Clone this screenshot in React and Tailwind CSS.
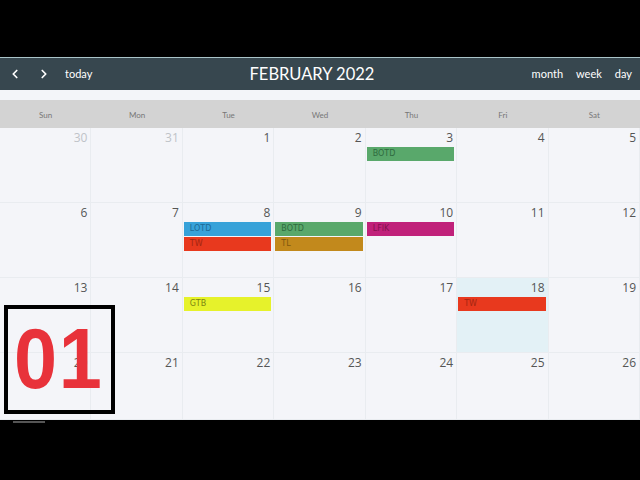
import { ChevronLeft, ChevronRight } from "lucide-react";

const days = ["Sun", "Mon", "Tue", "Wed", "Thu", "Fri", "Sat"];

const weeks = [
  [
    { n: 30, other: true },
    { n: 31, other: true },
    { n: 1 },
    { n: 2 },
    { n: 3, events: [{ t: "BOTD", c: "bg-[#59a86b] text-[#2f6b3f]" }] },
    { n: 4 },
    { n: 5 },
  ],
  [
    { n: 6 },
    { n: 7 },
    {
      n: 8,
      events: [
        { t: "LOTD", c: "bg-[#37a2d9] text-[#1e6a96]" },
        { t: "TW", c: "bg-[#e8391e] text-[#a32611]" },
      ],
    },
    {
      n: 9,
      events: [
        { t: "BOTD", c: "bg-[#59a86b] text-[#2f6b3f]" },
        { t: "TL", c: "bg-[#c2891c] text-[#7f580f]" },
      ],
    },
    { n: 10, events: [{ t: "LFIK", c: "bg-[#c0217a] text-[#85104f]" }] },
    { n: 11 },
    { n: 12 },
  ],
  [
    { n: 13 },
    { n: 14 },
    { n: 15, events: [{ t: "GTB", c: "bg-[#e6f22b] text-[#7d8512]" }] },
    { n: 16 },
    { n: 17 },
    { n: 18, today: true, events: [{ t: "TW", c: "bg-[#e8391e] text-[#a32611]" }] },
    { n: 19 },
  ],
  [{ n: 20 }, { n: 21 }, { n: 22 }, { n: 23 }, { n: 24 }, { n: 25 }, { n: 26 }],
];

const Cell = ({ day }) => (
  <div
    className={`border-r border-[#e9ecf0] flex flex-col ${
      day.today ? "bg-[#e3f1f6]" : ""
    }`}
  >
    <div
      className={`h-[19px] pr-[3px] pt-[2px] text-right text-[12px] leading-[15px] ${
        day.other ? "text-[#bfc3c8]" : "text-[#555]"
      }`}
    >
      {day.n}
    </div>
    {(day.events || []).map((e, i) => (
      <div
        key={i}
        className={`ml-[1px] mr-[2px] mb-[1px] h-[14px] pl-[6px] text-[8px] leading-[14px] ${e.c}`}
        style={{ fontFamily: "'DejaVu Sans', sans-serif" }}
      >
        {e.t}
      </div>
    ))}
  </div>
);

export default function App() {
  return (
    <div className="w-[640px] h-[480px] bg-black relative overflow-hidden" style={{ fontFamily: "Lato, 'Open Sans', sans-serif" }}>
      <div className="h-[57px]" />
      <div className="h-[33px] bg-[#37474f] border-t border-[#a9c4c9] flex items-center text-white">
        <div className="flex items-center pl-[8px] gap-[13px]">
          <ChevronLeft className="w-[14px] h-[14px]" strokeWidth={3} />
          <ChevronRight className="w-[14px] h-[14px] ml-[2px]" strokeWidth={3} />
          <span className="text-[11px] ml-[1px]">today</span>
        </div>
        <div className="flex-1 text-center text-[16.5px]">FEBRUARY 2022</div>
        <div className="flex items-center gap-[13px] pr-[8px] text-[11px]">
          <span>month</span>
          <span>week</span>
          <span>day</span>
        </div>
      </div>
      <div className="h-[10px] bg-[#f3f5f9]" />
      <div className="h-[28px] bg-[#d3d3d3] grid grid-cols-7 items-center text-[8px] text-[#777]">
        {days.map((d) => (
          <div key={d} className="text-center pt-[2px]">{d}</div>
        ))}
      </div>
      <div className="bg-[#f4f5f9] grid grid-rows-[75px_75px_75px_67px]" style={{ fontFamily: "'Open Sans', sans-serif" }}>
        {weeks.map((w, i) => (
          <div key={i} className="grid grid-cols-7 border-b border-[#e9ecf0]">
            {w.map((d, j) => (
              <Cell key={j} day={d} />
            ))}
          </div>
        ))}
      </div>
      <div className="absolute left-[13px] top-[421px] w-[32px] h-[2px] bg-[#555]" />
      <div className="absolute left-[4px] top-[305px] w-[111px] h-[109px] border-[4px] border-black flex items-center pl-[6px]">
        <span
          className="text-[#e8323a] text-[86px] font-black leading-none tracking-[2px] pb-[4px] scale-x-90 origin-left"
          style={{ fontFamily: "'Liberation Sans', Arial, sans-serif" }}
        >
          01
        </span>
      </div>
    </div>
  );
}
